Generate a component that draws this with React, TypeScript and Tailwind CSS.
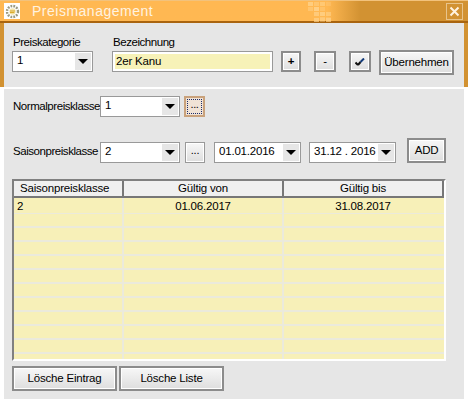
const font = "[font-family:'Liberation_Sans',Arial,sans-serif]";

function Combo({ value, className }: { value: string; className: string }) {
  return (
    <div className={`flex h-[21px] items-stretch justify-between whitespace-nowrap border border-[#999] bg-white p-[1px] text-[11.5px] leading-[15px] tracking-[-0.2px] text-black ${className}`}>
      <span className="pl-[3px]">{value}</span>
      <span className="flex w-[16px] items-center justify-center bg-[#e6e6e6]">
        <span className="h-0 w-0 border-x-[5px] border-t-[5px] border-x-transparent border-t-black" />
      </span>
    </div>
  );
}

function Btn({ children, className }: { children: React.ReactNode; className: string }) {
  return (
    <button className={`flex items-center justify-center whitespace-nowrap border-2 border-[#8c8c8c] bg-gradient-to-b from-[#f7f7f7] to-[#dedede] text-[11.5px] tracking-[-0.2px] text-black shadow-[inset_0_0_0_1px_#fff] ${className}`}>
      {children}
    </button>
  );
}

function Checker() {
  const cells = [
    [0, 0, 0.8], [6, 0, 0.5], [12, 0, 0.6], [18, 0, 0.3],
    [0, 5, 0.5], [6, 5, 0.9], [12, 5, 0.4],
    [6, 10, 0.7], [12, 10, 0.8], [18, 10, 0.6],
    [12, 15, 0.5], [18, 15, 0.3],
    [6, 16, 0.7], [12, 16, 0.4], [18, 16, 0.7],
  ];
  return (
    <svg width="26" height="22" className="mr-[112px]">
      {cells.map(([x, y, o], i) => (
        <rect key={i} x={x} y={y + 2} width="5" height="4" fill="#ffd28a" opacity={o} />
      ))}
    </svg>
  );
}

function TitleIcon() {
  return (
    <div className="flex h-[16px] w-[16px] items-center justify-center bg-white">
      <svg width="15" height="15" viewBox="0 0 15 15">
        <circle cx="7.5" cy="7.5" r="5.5" fill="none" stroke="#9a9a80" strokeWidth="2.4" strokeDasharray="1.8 1.1" />
        <circle cx="7.5" cy="7.5" r="3.2" fill="#f3e6b0" />
        <path d="M5 7h5M5 8.6h4.4" stroke="#d9a520" strokeWidth="1" />
      </svg>
    </div>
  );
}

const rows = Array.from({ length: 12 });

export default function App() {
  return (
    <div className={`h-[403px] w-[468px] overflow-hidden bg-white ${font}`}>
      <div className="flex h-[87px] flex-col bg-[#d29232]">
        <div className="flex h-[23px] items-center border-t border-b-2 border-t-[#f2c27c] border-b-[#a9640f] bg-gradient-to-r from-[#ffb852] from-70% to-[#d29232] to-[77%] pl-[4px] pr-[5px]">
          <TitleIcon />
          <span className="ml-[12px] text-[14px] tracking-[0.5px] text-[#fff3e0]">Preismanagement</span>
          <div className="ml-auto flex items-center">
            <Checker />
            <div className="flex h-[17px] w-[17px] items-center justify-center border border-[#e8c48c] text-[#fff3e0]">
              <svg width="11" height="11" viewBox="0 0 11 11">
                <path d="M1.5 1.5l8 8M9.5 1.5l-8 8" stroke="#fff3e0" strokeWidth="2" />
              </svg>
            </div>
          </div>
        </div>
        <div className="mx-[4px] flex-1 bg-[#e6e6e6] text-[11.5px] tracking-[-0.45px] text-black">
          <div className="flex h-[28px] items-end pb-[1px] pl-[9px]">
            <span className="w-[100px] leading-[15px]">Preiskategorie</span>
            <span className="leading-[15px]">Bezeichnung</span>
          </div>
          <div className="flex items-start pl-[8px]">
            <Combo value="1" className="w-[81px]" />
            <div className="ml-[19px] h-[21px] w-[161px] border border-[#999] bg-[#f7f2b8] leading-[15px] tracking-[-0.2px] shadow-[inset_0_0_0_2px_#fff]">
              <span className="block pl-[3px] pt-[2px]">2er Kanu</span>
            </div>
            <Btn className="ml-[8px] h-[21px] w-[20px] font-bold">+</Btn>
            <Btn className="ml-[13px] h-[21px] w-[22px]">-</Btn>
            <Btn className="ml-[13px] h-[21px] w-[22px]">
              <svg width="10" height="8" viewBox="0 0 10 8">
                <path d="M0.5 4.5l2.5 2.5" stroke="#111" strokeWidth="2" fill="none" />
                <path d="M3 7L5.5 4" stroke="#111" strokeWidth="2" fill="none" />
                <path d="M5.5 4L9 0.5" stroke="#123a78" strokeWidth="2" fill="none" />
              </svg>
            </Btn>
            <Btn className="ml-[8px] -mt-[1px] h-[25px] w-[75px]">Übernehmen</Btn>
          </div>
        </div>
      </div>

      <div className="mx-[4px] mt-[2px] h-[310px] bg-[#e6e6e6] pl-[8px] text-[11.5px] tracking-[-0.45px] text-black">
        <div className="flex items-center pt-[7px]">
          <span className="w-[88px] whitespace-nowrap pl-[1px]">Normalpreisklasse</span>
          <Combo value="1" className="w-[80px]" />
          <button className="ml-[4px] flex h-[21px] w-[21px] items-center justify-center border-2 border-[#c9a27c] bg-[#f0e3d6] p-[1px] leading-none">
            <span className="flex h-full w-full items-end justify-center border border-dotted border-[#1c2c6b] pb-[3px] text-[11px]">...</span>
          </button>
        </div>
        <div className="mt-[24px] flex items-center">
          <span className="w-[88px] whitespace-nowrap pl-[1px]">Saisonpreisklasse</span>
          <Combo value="2" className="w-[80px]" />
          <Btn className="ml-[5px] h-[21px] w-[20px] !border !border-[#999] pb-[4px] text-[11px]">...</Btn>
          <Combo value="01.01.2016" className="ml-[9px] w-[87px]" />
          <Combo value="31.12 . 2016" className="ml-[8px] w-[87px]" />
          <Btn className="ml-[11px] -mt-[3px] h-[25px] w-[39px]">ADD</Btn>
        </div>

        <div className="mt-[16px] h-[182px] w-[434px] overflow-hidden border-2 border-[#808080] border-r-white border-b-white bg-[#e6e6e6] tracking-[-0.2px]">
          <div className="flex h-[17px] w-[430px] bg-[#808080] text-center leading-[15px]">
            <div className="w-[110px] border-r-2 border-b-2 border-r-[#777] border-b-[#777] bg-[#f0f0f0] pl-[6px] text-left">Saisonpreisklasse</div>
            <div className="w-[160px] border-r-2 border-b-2 border-r-[#777] border-b-[#777] bg-[#f0f0f0]">Gültig von</div>
            <div className="w-[160px] border-b-2 border-r-2 border-b-[#777] border-r-[#777] bg-[#f0f0f0]">Gültig bis</div>
          </div>
          {rows.map((_, i) => (
            <div key={i} className={`flex w-[430px] bg-[#f7f0b8] ${i === 0 ? "h-[16px] border-b border-b-[#ebeadb]" : "h-[14px] border-b-2 border-b-[#ebeadb]"}`}>
              <div className="w-[110px] border-r-2 border-r-[#ebeadb] pl-[3px] leading-[16px]">{i === 0 ? "2" : ""}</div>
              <div className="w-[160px] border-r-2 border-r-[#ebeadb] text-center leading-[16px]">{i === 0 ? "01.06.2017" : ""}</div>
              <div className="w-[158px] text-center leading-[16px]">{i === 0 ? "31.08.2017" : ""}</div>
            </div>
          ))}
        </div>

        <div className="mt-[5px] flex gap-[2px]">
          <Btn className="h-[25px] w-[105px]">Lösche Eintrag</Btn>
          <Btn className="h-[25px] w-[105px]">Lösche Liste</Btn>
        </div>
      </div>
    </div>
  );
}
